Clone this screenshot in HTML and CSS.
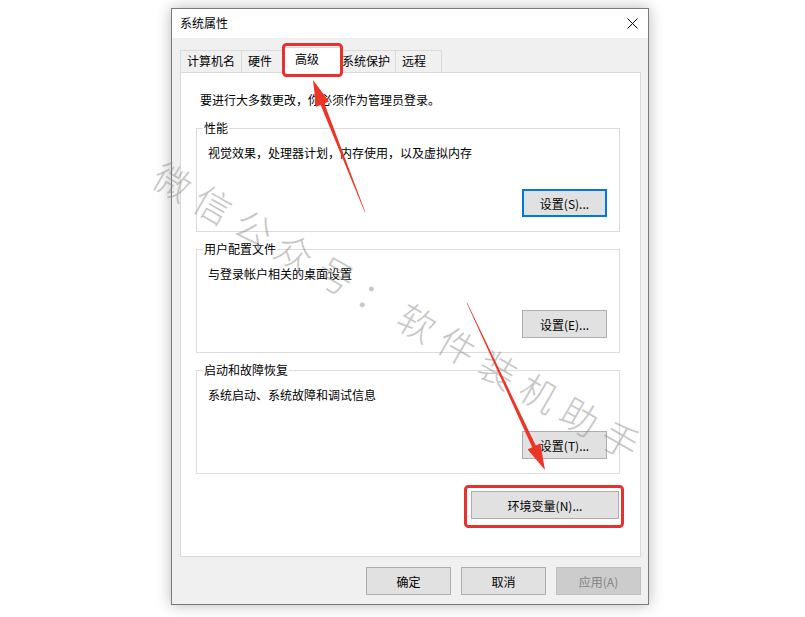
FILE: index.html
```html
<!DOCTYPE html>
<html lang="zh-CN">
<head>
<meta charset="utf-8">
<title>系统属性</title>
<link rel="stylesheet" href="styles.css">
</head>
<body>
<div class="window">
  <div class="titlebar">
    <span class="title">系统属性</span>
    <svg class="close" width="11" height="11" viewBox="0 0 11 11"><path d="M0.5 0.5 L10.5 10.5 M10.5 0.5 L0.5 10.5" stroke="#000" stroke-width="1" fill="none"/></svg>
  </div>
  <div class="content">
    <div class="tabs">
      <div class="tab t1">计算机名</div>
      <div class="tab t2">硬件</div>
      <div class="tab active">高级</div>
      <div class="tab t4">系统保护</div>
      <div class="tab t5">远程</div>
    </div>
    <div class="panel">
      <p class="note">要进行大多数更改，你必须作为管理员登录。</p>
      <div class="group first">
        <span class="legend">性能</span>
        <p class="desc">视觉效果，处理器计划，内存使用，以及虚拟内存</p>
        <button class="btn set focus">设置(S)...</button>
      </div>
      <div class="group">
        <span class="legend">用户配置文件</span>
        <p class="desc">与登录帐户相关的桌面设置</p>
        <button class="btn set">设置(E)...</button>
      </div>
      <div class="group">
        <span class="legend">启动和故障恢复</span>
        <p class="desc">系统启动、系统故障和调试信息</p>
        <button class="btn set">设置(T)...</button>
      </div>
      <div class="envrow">
        <button class="btn env">环境变量(N)...</button>
      </div>
    </div>
    <div class="footer">
      <button class="btn foot">确定</button>
      <button class="btn foot">取消</button>
      <button class="btn foot disabled">应用(A)</button>
    </div>
  </div>
</div>
<svg class="overlay" width="805" height="617" viewBox="0 0 805 617">
  <text class="watermark" x="157.4" y="171" transform="rotate(30 157.4 171)">微信公众号：软件装机助手</text>
  <rect x="283.5" y="44.5" width="58" height="31" rx="3" class="redbox"/>
  <rect x="465.5" y="486.5" width="157" height="40" rx="3" class="redbox"/>
  <polygon class="arrow" points="365.3,211.9 324.4,103.5 329,101.6 313,80 316,106.8 320.6,104.9 364.7,212.1"/>
  <polygon class="arrow" points="467.3,302.9 535.8,445.6 540.3,443.4 545,470 527.7,449.4 532.2,447.2 466.7,303.1"/>
</svg>
</body>
</html>
```
FILE: styles.css
```css
html, body {
  margin: 0;
  padding: 0;
}
body {
  width: 805px;
  height: 617px;
  overflow: hidden;
  background: #ffffff;
  position: relative;
  font-family: "Noto Sans CJK SC", "Microsoft YaHei", sans-serif;
  font-size: 12px;
  color: #000;
}
.window {
  margin: 8px 0 0 171px;
  width: 478px;
  height: 597px;
  box-sizing: border-box;
  border: 1px solid #7a7a7a;
  box-shadow: 0 0 14px rgba(0, 0, 0, 0.28);
  background: #f0f0f0;
  display: flex;
  flex-direction: column;
}
.titlebar {
  height: 29px;
  background: #ffffff;
  display: flex;
  align-items: center;
  justify-content: space-between;
  padding: 0 10px 0 8px;
}
.title {
  line-height: 16px;
  margin-top: -1px;
}
.close {
  display: block;
  margin-top: -1px;
}
.content {
  flex: 1;
  padding: 12px 8px 0 8px;
  display: flex;
  flex-direction: column;
}
.tabs {
  display: flex;
  align-items: flex-end;
  height: 22px;
  position: relative;
  z-index: 2;
}
.tab {
  box-sizing: border-box;
  height: 22px;
  border: 1px solid #d9d9d9;
  border-bottom: none;
  background: #f0f0f0;
  line-height: 20px;
  padding: 0 6px;
  margin-left: -1px;
  white-space: nowrap;
}
.tab.t1 { margin-left: 0; width: 62px; }
.tab.t2 { width: 45px; }
.tab.active {
  background: #ffffff;
  height: 26px;
  margin-bottom: -1px;
  margin-left: -3px;
  margin-right: -2px;
  width: 59px;
  padding: 0 11px;
  line-height: 22px;
  position: relative;
  z-index: 3;
}
.tab.t4 { width: 57px; padding: 0 2px; }
.tab.t5 { width: 47px; }
.panel {
  box-sizing: border-box;
  width: 461px;
  height: 485px;
  border: 1px solid #d9d9d9;
  background: #ffffff;
  padding: 0 20px 0 15px;
  position: relative;
  z-index: 1;
}
.note {
  margin: 19px 0 0 4px;
  line-height: 16px;
}
.group {
  position: relative;
  box-sizing: border-box;
  height: 104px;
  border: 1px solid #dcdcdc;
  margin-top: 17px;
  padding: 16px 12px 14px 11px;
  display: flex;
  flex-direction: column;
}
.group.first {
  margin-top: 20px;
}
.legend {
  position: absolute;
  top: -9px;
  left: 6px;
  padding: 0 1px;
  line-height: 16px;
  background: #ffffff;
}
.desc {
  margin: 0;
  line-height: 16px;
}
.btn {
  font-family: "Noto Sans CJK SC", "Microsoft YaHei", sans-serif;
  font-size: 12px;
  color: #000;
  background: #e1e1e1;
  border: 1px solid #adadad;
  box-sizing: border-box;
  height: 28px;
  padding: 0;
  margin: 0;
}
.btn.set {
  width: 85px;
  margin-top: auto;
  align-self: flex-end;
}
.btn.focus {
  border: 2px solid #0078d7;
}
.envrow {
  display: flex;
  justify-content: flex-end;
  margin-top: 17px;
}
.btn.env {
  width: 148px;
  margin-right: 1px;
}
.footer {
  display: flex;
  justify-content: flex-end;
  gap: 10px;
  margin-top: 10px;
  margin-right: -1px;
}
.btn.foot {
  width: 85px;
}
.btn.disabled {
  background: #cccccc;
  border-color: #bfbfbf;
  color: #838383;
}
.overlay {
  position: absolute;
  left: 0;
  top: 0;
  pointer-events: none;
  z-index: 10;
}
.watermark {
  font-family: "Noto Sans CJK SC", sans-serif;
  font-size: 37px;
  font-weight: 300;
  letter-spacing: 10px;
  dominant-baseline: central;
  fill: #8c8c8c;
  opacity: 0.48;
}
.redbox {
  fill: none;
  stroke: #e8312f;
  stroke-width: 3;
}
.arrow {
  fill: #ec3527;
}
```
